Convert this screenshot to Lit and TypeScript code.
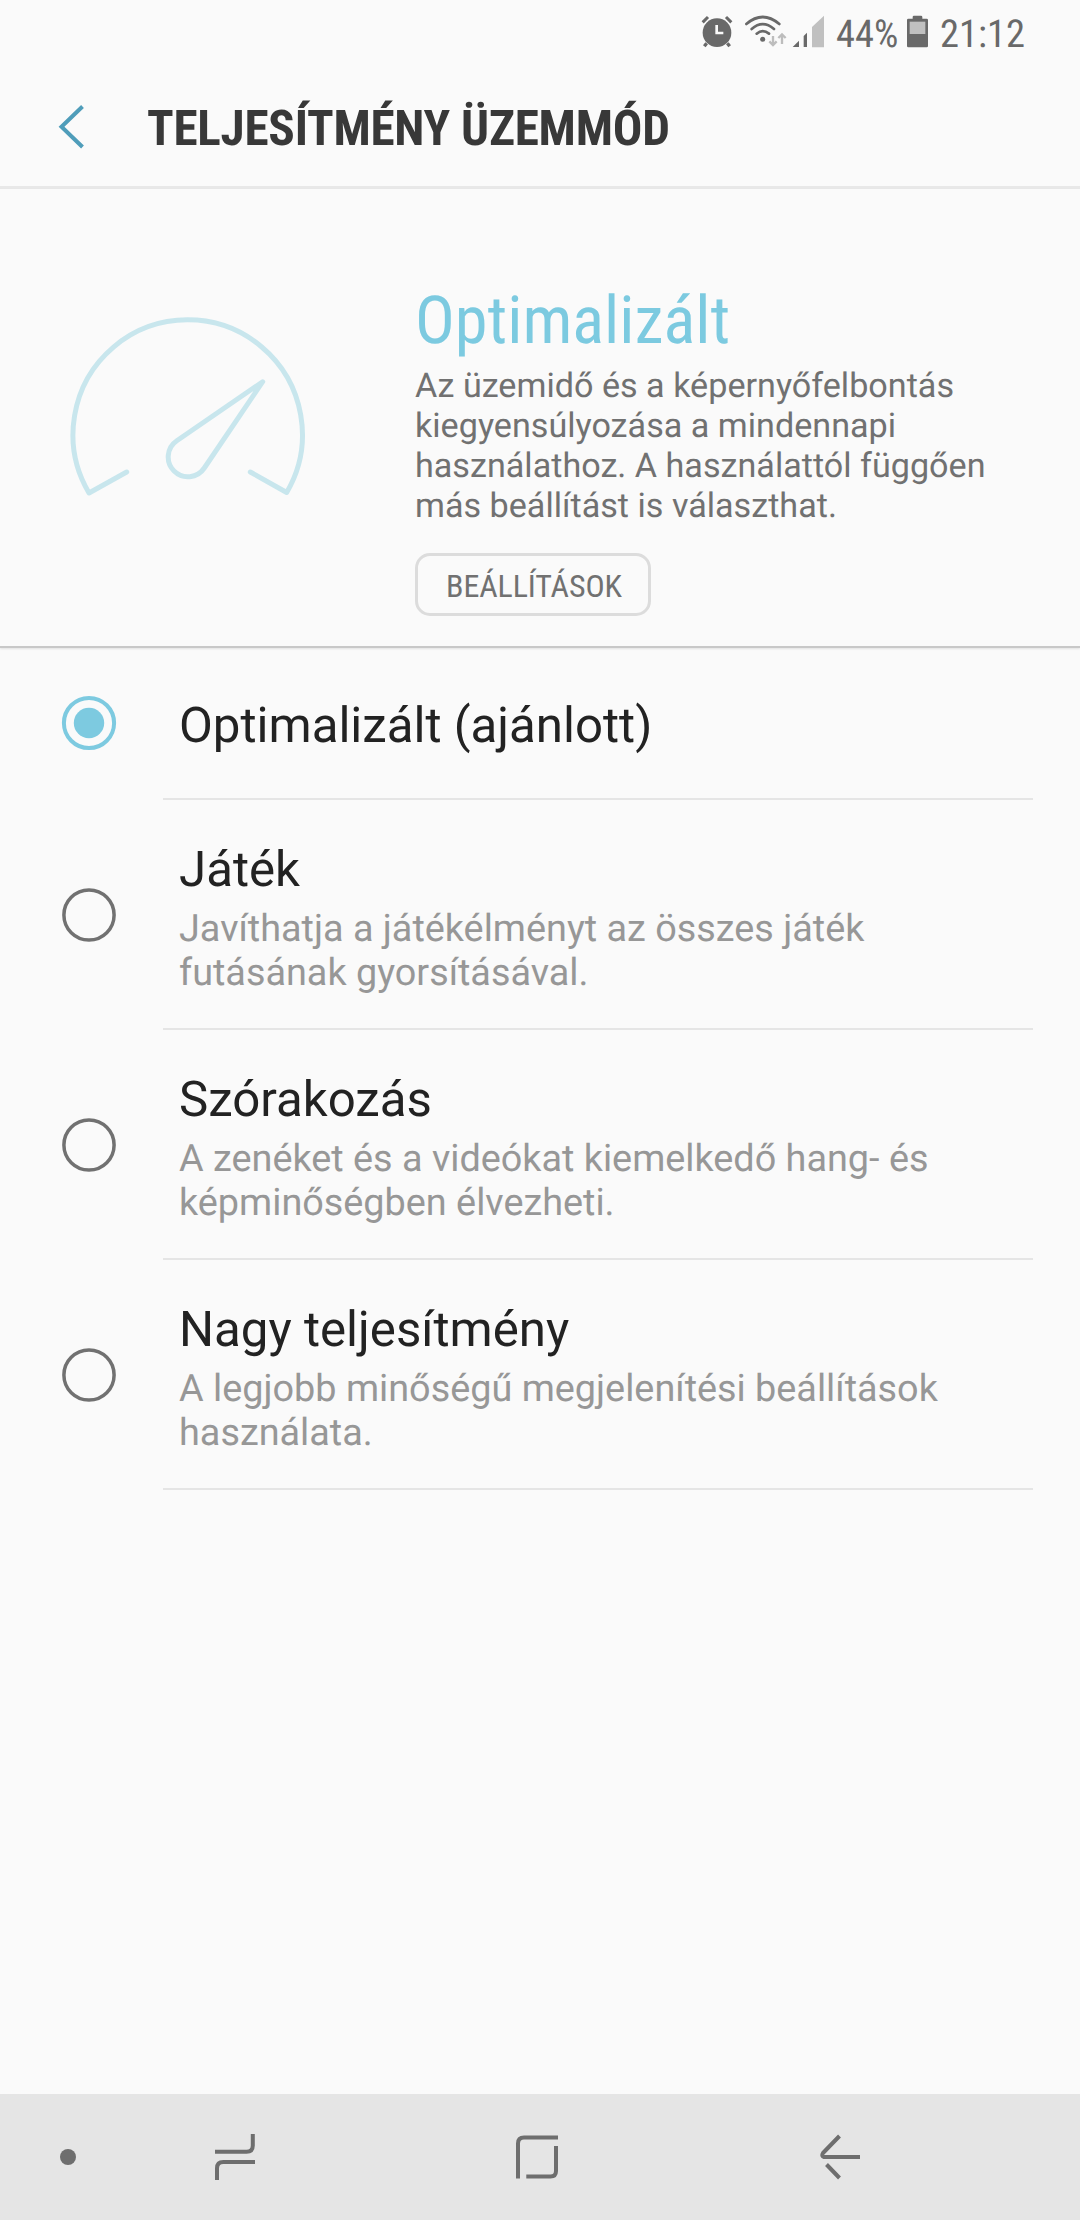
import { LitElement, html, css, svg, nothing } from "lit";
import { customElement, property } from "lit/decorators.js";

@customElement("status-bar")
class StatusBar extends LitElement {
  static styles = css`
    :host { display: flex; height: 66px; box-sizing: border-box; padding: 15px 0 0 701px; color: #696969; }
    svg { display: block; flex: none; }
    .wifi { margin-left: 11px; }
    .signal { margin-left: 4px; }
    .label { flex: none; font-size: 38.5px; line-height: 39px; white-space: nowrap; font-family: "Roboto Condensed", Roboto, sans-serif; font-stretch: 75%; }
    .percent { width: 71px; margin-left: 11px; }
    .clock { margin-left: 12px; }
  `;
  render() {
    return html`
      <svg width="32" height="33" viewBox="33 45 96 99" fill="none" stroke="currentColor">
        <circle cx="81" cy="98" r="43" fill="currentColor" stroke="none" />
        <path d="M38 67L54 51M108 51l16 16" stroke-width="9" />
        <path d="M50 130l-7 9M112 130l7 9" stroke-width="10" />
        <path d="M80 75v24h20" stroke="#fafafa" stroke-width="8" />
      </svg>
      <svg class="wifi" width="44" height="33" viewBox="162 45 132 99" fill="none" stroke="currentColor" stroke-width="8">
        <path d="M169 72Q218 30 268 72M185 87Q218 58 252 87M200 101Q218 86 237 101" stroke-linecap="round" />
        <circle cx="218" cy="118" r="7.5" fill="currentColor" stroke="none" />
        <path d="M249 108v26M238 124l11 11 11-11M276 132v-28M265 114l11-11 11 11" stroke="#bdbdbd" stroke-width="7" />
      </svg>
      <svg class="signal" width="33" height="33" viewBox="306 45 99 99">
        <path d="M308 141l19-19v19z" fill="currentColor" />
        <path d="M341 141v-33l10-10v43z" fill="currentColor" />
        <path d="M366 142V81l36-34v95z" fill="#c0c0c0" />
      </svg>
      <span class="label percent">44%</span>
      <svg width="21" height="33" viewBox="651 45 63 99">
        <path d="M655 56h13v-5q0-4 4-4h21q4 0 4 4v5h13q4 0 4 4v78q0 4-4 4h-55q-4 0-4-4V60q0-4 4-4z" fill="currentColor" />
        <path d="M659 65h47v37h-47z" fill="#c0c0c0" />
      </svg>
      <span class="label clock">21:12</span>
    `;
  }
}

@customElement("mode-option")
class ModeOption extends LitElement {
  @property() name = "";
  @property() detail = "";
  @property({ type: Boolean }) selected = false;
  static styles = css`
    :host { display: block; }
    .row { display: flex; align-items: center; height: 150px; padding-left: 61px; box-sizing: border-box; }
    .row.tall { height: 228px; }
    .radio { display: block; flex: none; color: #717171; }
    .tall .radio { margin-top: 2px; }
    .radio.on { color: #7dcae0; }
    .text { margin-left: 62px; width: 800px; padding-top: 6px; }
    .name { font-size: 49.2px; line-height: 60px; color: #222; }
    .detail { margin-top: 7px; font-size: 37.8px; line-height: 44px; color: #979797; }
    .line { height: 2px; margin: 0 47px 0 163px; background: #e5e5e5; }
  `;
  render() {
    return html`
      <div class="row ${this.detail ? "tall" : ""}">
        <svg class="radio ${this.selected ? "on" : ""}" width="56" height="56" viewBox="0 0 56 56">
          <circle cx="28" cy="28" r="25.1" fill="none" stroke="currentColor" stroke-width=${this.selected ? 4 : 3.5} />
          ${this.selected ? svg`<circle cx="28" cy="28" r="15.2" fill="currentColor" />` : nothing}
        </svg>
        <div class="text">
          <div class="name">${this.name}</div>
          ${this.detail ? html`<div class="detail">${this.detail}</div>` : nothing}
        </div>
      </div>
      <div class="line"></div>
    `;
  }
}

const MODES = [
  { name: "Optimalizált (ajánlott)", detail: "", selected: true },
  { name: "Játék", detail: "Javíthatja a játékélményt az összes játék futásának gyorsításával.", selected: false },
  { name: "Szórakozás", detail: "A zenéket és a videókat kiemelkedő hang- és képminőségben élvezheti.", selected: false },
  { name: "Nagy teljesítmény", detail: "A legjobb minőségű megjelenítési beállítások használata.", selected: false },
];

@customElement("app-root")
class AppRoot extends LitElement {
  static styles = css`
    :host { display: flex; flex-direction: column; width: 1080px; height: 2220px; background: #fafafa; font-family: Roboto, sans-serif; text-rendering: geometricPrecision; overflow: hidden; }
    .condensed { font-family: "Roboto Condensed", Roboto, sans-serif; font-stretch: 75%; white-space: nowrap; }
    svg { display: block; flex: none; }
    .header { display: flex; align-items: center; flex: none; height: 123px; box-sizing: border-box; padding-left: 56px; border-bottom: 3px solid #e8e8e8; }
    .title { margin: 5px 0 0 59px; font-size: 49.2px; letter-spacing: -0.25px; line-height: 60px; font-weight: 700; color: #383838; }
    .hero { display: flex; flex: none; height: 459px; box-sizing: border-box; border-bottom: 2px solid #c8c8c8; box-shadow: 0 1px 2px rgba(0, 0, 0, 0.1); }
    .gauge { margin: 121px 0 0 60px; }
    .info { margin: 94px 0 0 95px; width: 590px; }
    .mode { font-size: 66.3px; line-height: 76px; color: #7ccae0; }
    .about { margin-top: 7px; font-size: 34.15px; line-height: 40px; color: #717171; }
    .button { display: flex; align-items: center; justify-content: center; width: 236px; height: 63px; margin-top: 27px; box-sizing: border-box; padding: 2px 0 0 2px; border: 3px solid #dcdcdc; border-radius: 15px; background: none; font-size: 32px; letter-spacing: -0.1px; color: #717171; }
    .modes { flex: 1; }
    .nav { display: flex; align-items: center; flex: none; height: 126px; background: #e5e5e5; color: #6e6e6e; }
    .dot { width: 16px; height: 16px; margin-left: 60px; border-radius: 50%; background: currentColor; }
    .recents { margin-left: 134px; }
    .home { margin-left: 252px; }
    .back { margin-left: 252px; }
  `;
  render() {
    return html`
      <status-bar></status-bar>
      <div class="header">
        <svg width="32" height="48" viewBox="56 102 32 48" fill="none" stroke="#4f9dba" stroke-width="4">
          <path d="M82.5 106.5L61.5 126.7 82.5 147" />
        </svg>
        <div class="title condensed">TELJESÍTMÉNY ÜZEMMÓD</div>
      </div>
      <div class="hero">
        <svg class="gauge" width="260" height="200" viewBox="60 310 260 200" fill="none" stroke="#c8e6ed" stroke-width="5" stroke-linecap="round" stroke-linejoin="round">
          <path d="M126.7 472L89 493A114.7 114.7 0 1 1 286.7 492.5L250.3 472" />
          <path d="M262.7 381.7L176.8 440.8A19.7 19.7 0 1 0 204.3 468z" />
        </svg>
        <div class="info">
          <div class="mode condensed">Optimalizált</div>
          <div class="about">Az üzemidő és a képernyőfelbontás kiegyensúlyozása a mindennapi használathoz. A használattól függően más beállítást is választhat.</div>
          <button class="button condensed">BEÁLLÍTÁSOK</button>
        </div>
      </div>
      <div class="modes">
        ${MODES.map((m) => html`<mode-option .name=${m.name} .detail=${m.detail} .selected=${m.selected}></mode-option>`)}
      </div>
      <div class="nav">
        <div class="dot"></div>
        <svg class="recents" width="50" height="50" viewBox="210 2132 50 50" fill="none" stroke="currentColor" stroke-width="4">
          <path d="M215 2151.7h31.5q6.3 0 6.3-6.3V2134M217 2180v-11.7q0-6.3 6.3-6.3H255" />
        </svg>
        <svg class="home" width="50" height="50" viewBox="512 2132 50 50" fill="none" stroke="currentColor" stroke-width="4">
          <path d="M518 2178.5V2143.5q0-6 6-6H558M556 2146v25q0 5.500-5.500 5.500H526.3" />
        </svg>
        <svg class="back" width="50" height="50" viewBox="814 2132 50 50" fill="none" stroke="currentColor" stroke-width="4" stroke-linejoin="round">
          <path d="M860 2157H824q-3-1-1-4L839.5 2136M826.5 2164.5L839.5 2178" />
        </svg>
      </div>
    `;
  }
}
